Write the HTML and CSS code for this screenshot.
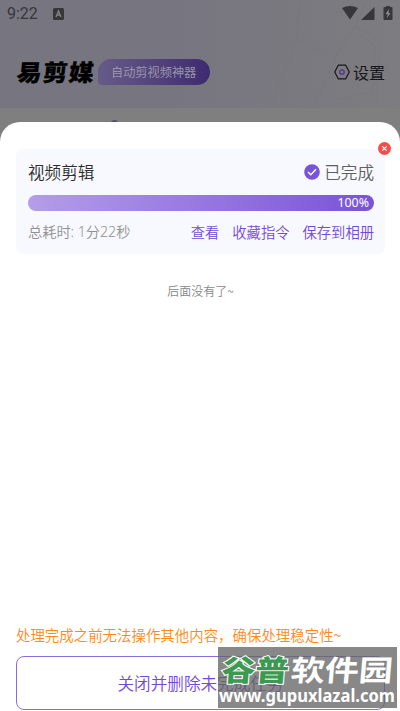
FILE: index.html
```html
<!DOCTYPE html>
<html lang="zh-CN">
<head>
<meta charset="utf-8">
<title>易剪媒</title>
<link rel="stylesheet" href="styles.css">
</head>
<body>
<div class="screen">
  <header class="top">
    <svg class="pattern" viewBox="0 0 130 108" fill="none" stroke="#747179" stroke-width="1" opacity=".2"><path d="M0 108L27 40 30 0M27 40l38 18 20-32 25 16-4 66M85 26l12-26M65 58 43 108M88 32l17 14-2 46-35 7"/></svg>
    <div class="status">
      <span class="clock">9:22</span>
      <svg class="app-badge" viewBox="0 0 11 12"><rect width="11" height="12" rx="1.5" fill="#37363b"/><path d="M3 9l2.500-6L8 9M4 7h3" fill="none" stroke="#85838a" stroke-width="1.300"/></svg>
      <svg class="signals" viewBox="0 0 52 16" fill="#37363b"><path d="M1 3Q9-1 17 3L9 14.500Z"/><path d="M33.500 2v13H20Z"/><path d="M45 1h4v1h1.500q1 0 1 1v11q0 1-1 1h-7q-1 0-1-1V3q0-1 1-1H45Z"/><path d="M48 4l-3.500 5h2l-.5 4L49.500 8h-2Z" fill="#8b898e"/></svg>
    </div>
    <div class="brand-row">
      <h1 class="logo">易剪媒</h1>
      <span class="slogan">自动剪视频神器</span>
      <div class="settings">
        <svg viewBox="0 0 16 16" fill="none"><path d="M4.300 1.200h7.400L15.300 8l-3.600 6.800H4.300L.7 8Z" stroke="#171719" stroke-width="1.200" stroke-linejoin="round"/><circle cx="8" cy="8" r="2.200" stroke="#4c378c" stroke-width="1.300"/></svg>
        <span>设置</span>
      </div>
    </div>
  </header>
  <div class="strip"><i class="peek"></i></div>
  <main class="sheet">
    <section class="card">
      <svg class="remove" viewBox="0 0 13 13"><circle cx="6.500" cy="6.500" r="6.500" fill="#fc4a4a"/><path d="M4.300 4.300l4.400 4.400M8.700 4.300L4.300 8.700" stroke="#fff" stroke-width="1.100"/></svg>
      <div class="row heading">
        <span>视频剪辑</span>
        <span class="done"><svg viewBox="0 0 16 16"><circle cx="8" cy="8" r="7.800" fill="#7953d8"/><path d="M4 8l2.800 2.800L12 5.300" fill="none" stroke="#fff" stroke-width="1.400"/></svg>已完成</span>
      </div>
      <div class="progress">100%</div>
      <div class="row details">
        <span>总耗时: 1分22秒</span>
        <span class="links"><a>查看</a><a>收藏指令</a><a>保存到相册</a></span>
      </div>
    </section>
    <p class="end">后面没有了~</p>
    <footer>
      <p class="notice">处理完成之前无法操作其他内容，确保处理稳定性~</p>
      <div class="close">关闭并删除未完成任务</div>
    </footer>
  </main>
  <div class="watermark">
    <svg viewBox="0 0 179 60">
      <g class="mark"><text class="green" x="3" y="34" textLength="67" lengthAdjust="spacingAndGlyphs">谷普</text><text class="white" x="72" y="34" textLength="102" lengthAdjust="spacingAndGlyphs">软件园</text></g>
      <text class="url" x="1" y="54.500" textLength="176" lengthAdjust="spacingAndGlyphs">www.gupuxlazal.com</text>
    </svg>
  </div>
</div>
</body>
</html>
```

FILE: styles.css
```css
* { box-sizing: border-box; }
body { margin: 0; font-family: "Noto Sans CJK SC", sans-serif; font-weight: 350; }
p, h1 { margin: 0; }
svg { display: block; flex: none; }
.screen { position: relative; width: 400px; height: 711px; overflow: hidden; background: #7f7f7f; display: flex; flex-direction: column; }
.top { position: relative; height: 108px; background: linear-gradient(90deg, #77757f 0%, #77757f 42%, #7d7c80 100%); }
.pattern { position: absolute; right: 0; top: 0; width: 130px; height: 108px; }
.status { height: 28px; display: flex; align-items: center; padding: 0 7px; }
.clock { font: 16px/20px Roboto, sans-serif; color: #37363b; width: 46px; }
.app-badge { width: 11px; height: 12px; }
.signals { width: 52px; height: 16px; margin: -3px 0 0 auto; }
.brand-row { position: relative; display: flex; align-items: center; height: 26px; margin-top: 31px; padding: 0 15px 0 17px; }
.logo { width: 81px; font-size: 25px; line-height: 26px; font-weight: 900; letter-spacing: 1px; color: #000; transform: translateY(-1px) skewX(-6deg) scaleY(.92); -webkit-text-stroke: .3px #000; white-space: nowrap; }
.slogan { width: 112px; height: 26px; border-radius: 13px 13px 13px 4px; background: linear-gradient(90deg, #665b88, #3e2b70); color: #9a95a8; font-size: 12.200px; font-weight: 400; line-height: 26px; padding-left: 13px; }
.settings { margin-left: auto; display: flex; align-items: center; gap: 3px; font-size: 16px; font-weight: 400; line-height: 26px; color: #171719; }
.settings svg { width: 16px; height: 16px; }
.strip { height: 14px; }
.peek { display: block; width: 7px; height: 7px; margin: 12px 0 0 111px; border-radius: 50%; background: #55498a; }
.sheet { flex: 1; background: #fff; border-radius: 20px 20px 0 0; padding: 27px 15px 1px 16px; display: flex; flex-direction: column; position: relative; }
.card { position: relative; height: 105px; background: #f8f9fe; border-radius: 7px; padding: 10px 11px 0 12px; }
.remove { position: absolute; right: -6px; top: -7px; width: 13px; height: 13px; }
.row { display: flex; align-items: center; justify-content: space-between; }
.heading { height: 25px; font-size: 16.600px; color: #2c2c2c; }
.done { display: flex; align-items: center; gap: 4px; color: #606060; }
.done svg { width: 16px; height: 16px; }
.progress { height: 16px; margin-top: 11px; border-radius: 8px; background: linear-gradient(90deg, #b49de9, #7953d8); color: #fff; text-align: right; padding-right: 5px; font: 400 12.400px/16px "Noto Sans", sans-serif; }
.details { height: 24px; margin-top: 8px; font-size: 14.400px; color: #909090; }
.details > span:first-child { font-family: "Noto Sans", "Noto Sans CJK SC", sans-serif; font-size: 14.200px; }
.links { display: flex; gap: 13px; font-size: 14.300px; color: #7448d8; }
.end { margin-top: 27px; text-align: center; font-size: 12px; line-height: 20px; color: #888; }
footer { margin-top: auto; }
.notice { color: #ff8a14; font-size: 14.450px; line-height: 22px; white-space: nowrap; }
.close { height: 54px; margin-top: 10px; border: 1px solid #8c6bdd; border-radius: 8px; text-align: center; font-size: 16.600px; line-height: 53px; color: #7448d8; }
.watermark { position: absolute; left: 218px; top: 647px; width: 179px; height: 61px; background: rgba(100, 100, 100, .77); }
.watermark svg { width: 179px; height: 60px; }
.mark { transform: translateX(3px) skewX(-5deg); font-size: 29px; font-weight: 900; }
.green { fill: #3b9a50; stroke: #fff; stroke-width: 2px; paint-order: stroke; }
.white { fill: #fff; font-weight: 700; }
.url { fill: #fff; font: 700 18px "Noto Sans", sans-serif; }
```
